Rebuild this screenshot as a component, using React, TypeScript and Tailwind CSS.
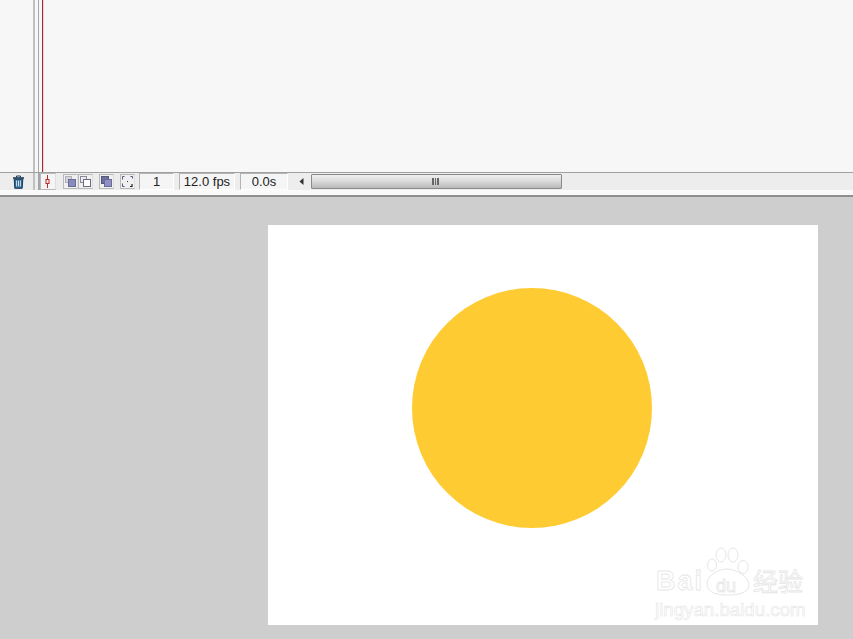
export default function App() {
  const sq = "h-[15px] flex items-center justify-center border border-[#b9b9b9] border-r-[#dedede] bg-[#f0f0f0]";
  const field = "h-[17px] border border-[#b4b4b4] border-r-white border-b-white flex items-center justify-center text-[13px] text-[#222] bg-[#f5f5f5] [font-family:'Liberation_Sans',sans-serif]";
  return (
    <div className="w-[853px] h-[639px] overflow-hidden flex flex-col bg-[#cecece]">
      <div className="h-[173px] bg-[#f7f7f7] flex shrink-0 border-b border-[#a0a0a0]">
        <div className="w-[33px]" />
        <div className="w-[2px] bg-[#c0c0c0]" />
        <div className="w-[3px]" />
        <div className="w-[1px] bg-[#a0a8ad]" />
        <div className="w-[3px]" />
        <div className="w-[1px] bg-[#a32a2a]" />
        <div className="w-[1px] bg-[#f0d0d0]" />
      </div>
      <div className="h-[17px] bg-[#ededed] flex items-center shrink-0">
        <div className="w-[33px] flex justify-center pl-[4px]">
          <svg width="13" height="14" viewBox="0 0 13 14">
            <path d="M1 3h11" stroke="#1e3c58" strokeWidth="1.6" />
            <path d="M4.5 2.5V1h4v1.5" stroke="#1e3c58" fill="none" />
            <path d="M2.2 4h8.6l-.6 9.3H2.8z" fill="#2f6a96" stroke="#1c3a56" />
            <path d="M4.6 5.5v6M6.5 5.5v6M8.4 5.5v6" stroke="#cfe0ec" />
          </svg>
        </div>
        <div className="w-[2px] h-full bg-[#c0c0c0]" />
        <div className="w-[3px]" />
        <div className="w-[2px] h-full bg-[#a0a8ad]" />
        <div className={sq + " w-[16px] h-[17px] bg-[#f5f5f5] pr-[2px]"}>
          <svg width="9" height="13" viewBox="0 0 9 13">
            <path d="M4.5 0v13" stroke="#c02828" />
            <rect x="3" y="4.5" width="3" height="4" fill="#f2f2f2" stroke="#c02828" />
          </svg>
        </div>
        <div className="w-[7px]" />
        <div className={sq + " w-[15px]"}>
          <svg width="11" height="11" viewBox="0 0 11 11">
            <rect x="0.5" y="0.5" width="6" height="6" fill="#d4d4dc" stroke="#b0b0bc" />
            <rect x="3.5" y="3.5" width="7" height="7" fill="#8a8abc" stroke="#6a6a98" />
          </svg>
        </div>
        <div className={sq + " w-[15px]"}>
          <svg width="11" height="11" viewBox="0 0 11 11">
            <rect x="0.5" y="0.5" width="6" height="6" fill="#ececf2" stroke="#8a8a98" />
            <rect x="3.5" y="3.5" width="7" height="7" fill="#fff" stroke="#6a6a80" />
          </svg>
        </div>
        <div className="w-[6px]" />
        <div className={sq + " w-[15px]"}>
          <svg width="11" height="11" viewBox="0 0 11 11">
            <rect x="0.5" y="0.5" width="7" height="7" fill="#6f6f9e" stroke="#55557e" />
            <rect x="3.5" y="3.5" width="7" height="7" fill="#9090c2" stroke="#6a6a98" />
          </svg>
        </div>
        <div className="w-[6px]" />
        <div className={sq + " w-[15px]"}>
          <svg width="11" height="11" viewBox="0 0 11 11" fill="none" stroke="#55557e">
            <path d="M2.5.5h-2v3M8.5.5h2v2M.5 7.5v3h2" />
            <rect x="5" y="5" width="1" height="1" fill="#333" stroke="none" />
            <path d="M10 8v2.500h-2" stroke="#222" strokeWidth="1.2" />
          </svg>
        </div>
        <div className="w-[4px]" />
        <div className={field + " w-[35px]"}>1</div>
        <div className="w-[5px]" />
        <div className={field + " w-[56px]"}>12.0 fps</div>
        <div className="w-[5px]" />
        <div className={field + " w-[48px]"}>0.0s</div>
        <div className="w-[4px]" />
        <div className="w-[15px] flex justify-center pl-[4px]">
          <svg width="5" height="7" viewBox="0 0 5 7"><path d="M4.5 0v7L0.5 3.500z" fill="#333" /></svg>
        </div>
        <div className="w-[4px]" />
        <div className="w-[251px] h-[15px] border border-[#8a8a8a] rounded-[1px] bg-gradient-to-b from-[#efefef] via-[#d9d9d9] to-[#b9b9b9] flex items-center justify-center">
          <div className="flex gap-[1px] mr-[2px]">
            <div className="w-[2px] h-[7px] bg-[#666]" />
            <div className="w-[1px] h-[7px] bg-[#666]" />
            <div className="w-[2px] h-[7px] bg-[#666]" />
          </div>
        </div>
      </div>
      <div className="h-[5px] bg-[#fafafa] shrink-0" />
      <div className="h-[2px] bg-[#8e8e8e] shrink-0" />
      <div className="flex-1 pl-[268px] pt-[28px]">
        <div className="w-[550px] h-[400px] bg-white relative">
          <div className="w-[240px] h-[240px] rounded-full bg-[#ffcb33] ml-[144px] mt-[63px] inline-block" />
          <div className="absolute left-[385px] top-[322px] w-[155px] h-[75px] text-transparent [-webkit-text-stroke:0.8px_#e6e6e6] [font-family:'Liberation_Sans',sans-serif]">
            <div className="absolute left-[3px] top-[21px] text-[27px] leading-none font-bold tracking-[2px]">Bai</div>
            <svg className="absolute left-[52px] top-0" width="48" height="50" viewBox="0 0 48 50" fill="#fff" stroke="#e6e6e6">
              <ellipse cx="7" cy="18" rx="4.5" ry="6" />
              <ellipse cx="16" cy="8" rx="5" ry="7" />
              <ellipse cx="28" cy="8" rx="5" ry="7" />
              <ellipse cx="38" cy="20" rx="5" ry="6.500" />
              <path d="M2 37c0-9 12-15 20-15s22 7 22 16c0 8-11 10-22 10S2 45 2 37z" />
            </svg>
            <div className="absolute left-[63px] top-[30px] text-[18px] leading-none">du</div>
            <div className="absolute left-[100px] top-[21px] text-[25px] leading-none [font-family:'Noto_Sans_CJK_SC',sans-serif]">经验</div>
            <div className="absolute left-[2px] top-[54px] text-[18.7px] leading-none [-webkit-text-stroke:0.6px_#e6e6e6]">jingyan.baidu.com</div>
          </div>
        </div>
      </div>
    </div>
  );
}
